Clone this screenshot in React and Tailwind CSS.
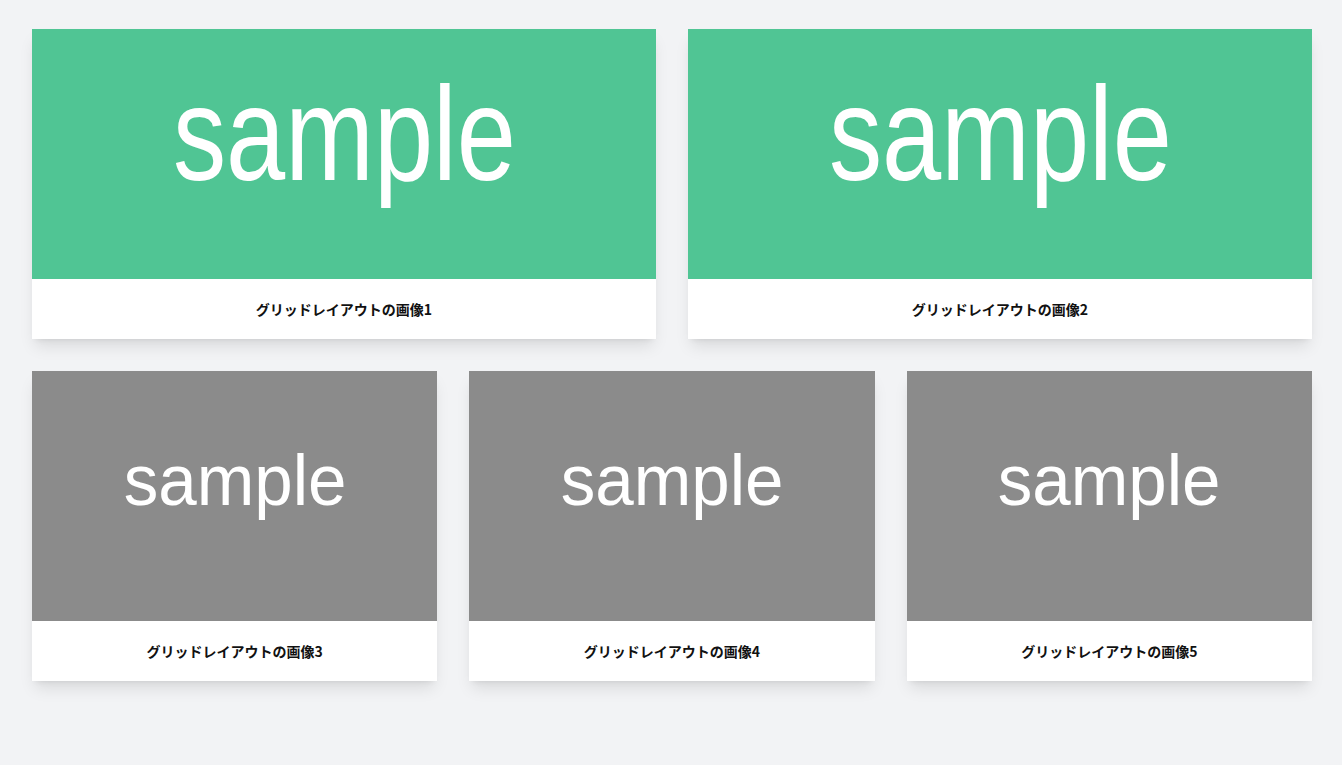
import React from 'react';

const topItems = [
  { id: 1, label: 'グリッドレイアウトの画像1' },
  { id: 2, label: 'グリッドレイアウトの画像2' },
];

const bottomItems = [
  { id: 3, label: 'グリッドレイアウトの画像3' },
  { id: 4, label: 'グリッドレイアウトの画像4' },
  { id: 5, label: 'グリッドレイアウトの画像5' },
];

function Card({ label, wide }) {
  return (
    <div className="bg-white shadow-lg overflow-hidden">
      {/* placeholder image */}
      {wide ? (
        <div className="h-[250px] bg-[#50c594] flex items-center justify-center pb-[40px] overflow-hidden">
          <span className="text-white text-[133px] leading-none scale-x-[0.8] font-['Liberation_Sans',Arial,sans-serif]">sample</span>
        </div>
      ) : (
        <div className="h-[250px] bg-[#8b8b8b] flex items-center justify-center pb-[32px] overflow-hidden">
          <span className="text-white text-[72px] leading-none scale-x-[0.96] font-['Liberation_Sans',Arial,sans-serif]">sample</span>
        </div>
      )}
      <div className="h-[60px] flex items-center justify-center">
        <p className="text-sm font-bold text-[#111] font-['Noto_Sans_CJK_JP','Noto_Sans',sans-serif]">{label}</p>
      </div>
    </div>
  );
}

export default function App() {
  return (
    <div className="min-h-screen bg-[#f2f3f5] pl-8 pr-[30px] pt-[29px] pb-8 flex flex-col gap-8">
      <div className="grid grid-cols-2 gap-8">
        {topItems.map(item => (
          <Card key={item.id} label={item.label} wide />
        ))}
      </div>
      <div className="grid grid-cols-3 gap-8">
        {bottomItems.map(item => (
          <Card key={item.id} label={item.label} />
        ))}
      </div>
    </div>
  );
}
